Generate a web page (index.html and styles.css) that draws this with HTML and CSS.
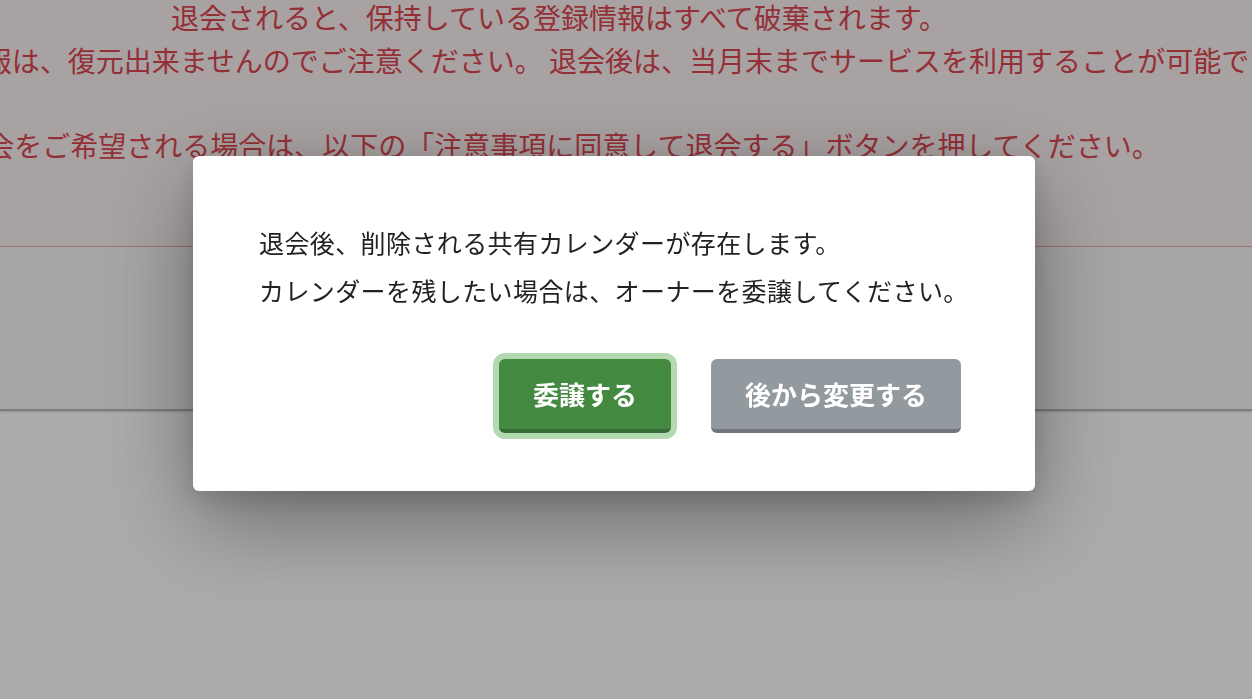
FILE: index.html
```html
<!DOCTYPE html>
<html lang="ja">
<head>
<meta charset="utf-8">
<title>退会</title>
<link rel="stylesheet" href="styles.css">
</head>
<body>
<div class="page">
  <section class="notice">
    <div class="notice-text">
      <div class="notice-line">退会されると、保持している登録情報はすべて破棄されます。</div>
      <div class="notice-line">削除された情報は、復元出来ませんのでご注意ください。 退会後は、当月末までサービスを利用することが可能です。</div>
      <div class="notice-line notice-blank">&nbsp;</div>
      <div class="notice-line">退会をご希望される場合は、以下の「注意事項に同意して退会する」ボタンを押してください。</div>
    </div>
  </section>
  <section class="band"></section>
</div>

<div class="overlay">
  <div class="modal" role="dialog">
    <div class="msg">
      <p>退会後、削除される共有カレンダーが存在します。</p>
      <p>カレンダーを残したい場合は、オーナーを委譲してください。</p>
    </div>
    <div class="actions">
      <button class="btn btn-green">委譲する</button>
      <button class="btn btn-gray">後から変更する</button>
    </div>
  </div>
</div>
</body>
</html>
```

FILE: styles.css
```css
html, body {
  margin: 0;
  padding: 0;
  height: 100%;
  overflow: hidden;
}

body {
  background: #ffffff;
  font-family: "Noto Sans CJK JP", "Noto Sans", sans-serif;
}

.page {
  width: 100%;
}

.notice {
  height: 250px;
  margin-top: -4px;
  background: #fcf2f2;
  border-bottom: 1px solid #f7a9b3;
  overflow: visible;
}

.notice-text {
  width: 1118px;
  display: flex;
  flex-direction: column;
  align-items: center;
}

.notice-line {
  white-space: nowrap;
  font-size: 28px;
  line-height: 42.5px;
  color: #dc4853;
}

.band {
  height: 162px;
  background: #f6f8f7;
  border-bottom: 2px solid #b9b9b9;
  box-shadow: 0 1px 2px rgba(0, 0, 0, 0.15);
}

.overlay {
  position: fixed;
  inset: 0;
  background: rgba(0, 0, 0, 0.33);
  overflow: hidden;
}

.modal {
  box-sizing: border-box;
  width: 842px;
  height: 335px;
  margin: 156px 0 0 193px;
  padding: 68px 60px 0 66px;
  background: #ffffff;
  border-radius: 6px;
  box-shadow: 0 30px 90px rgba(0, 0, 0, 0.38), 0 8px 24px rgba(0, 0, 0, 0.12);
}

.msg {
  display: flex;
  flex-direction: column;
  gap: 12px;
}

.msg p {
  margin: 0;
  font-size: 25px;
  line-height: 36px;
  letter-spacing: 0.4px;
  color: #222222;
  white-space: nowrap;
}

.actions {
  display: flex;
  justify-content: flex-end;
  gap: 40px;
  margin-top: 51px;
  margin-right: 14px;
}

.btn {
  box-sizing: border-box;
  height: 74px;
  padding: 0;
  border: none;
  border-radius: 6px;
  font-family: "Noto Sans CJK JP", "Noto Sans", sans-serif;
  font-size: 26px;
  font-weight: 700;
  color: #ffffff;
  cursor: pointer;
  line-height: 1;
}

.btn-green {
  width: 172px;
  background: #43893f;
  border-bottom: 4px solid #386a38;
  box-shadow: 0 0 0 6px #b3d9b1;
}

.btn-gray {
  width: 250px;
  background: #939a9f;
  border-bottom: 4px solid #727579;
}
```
